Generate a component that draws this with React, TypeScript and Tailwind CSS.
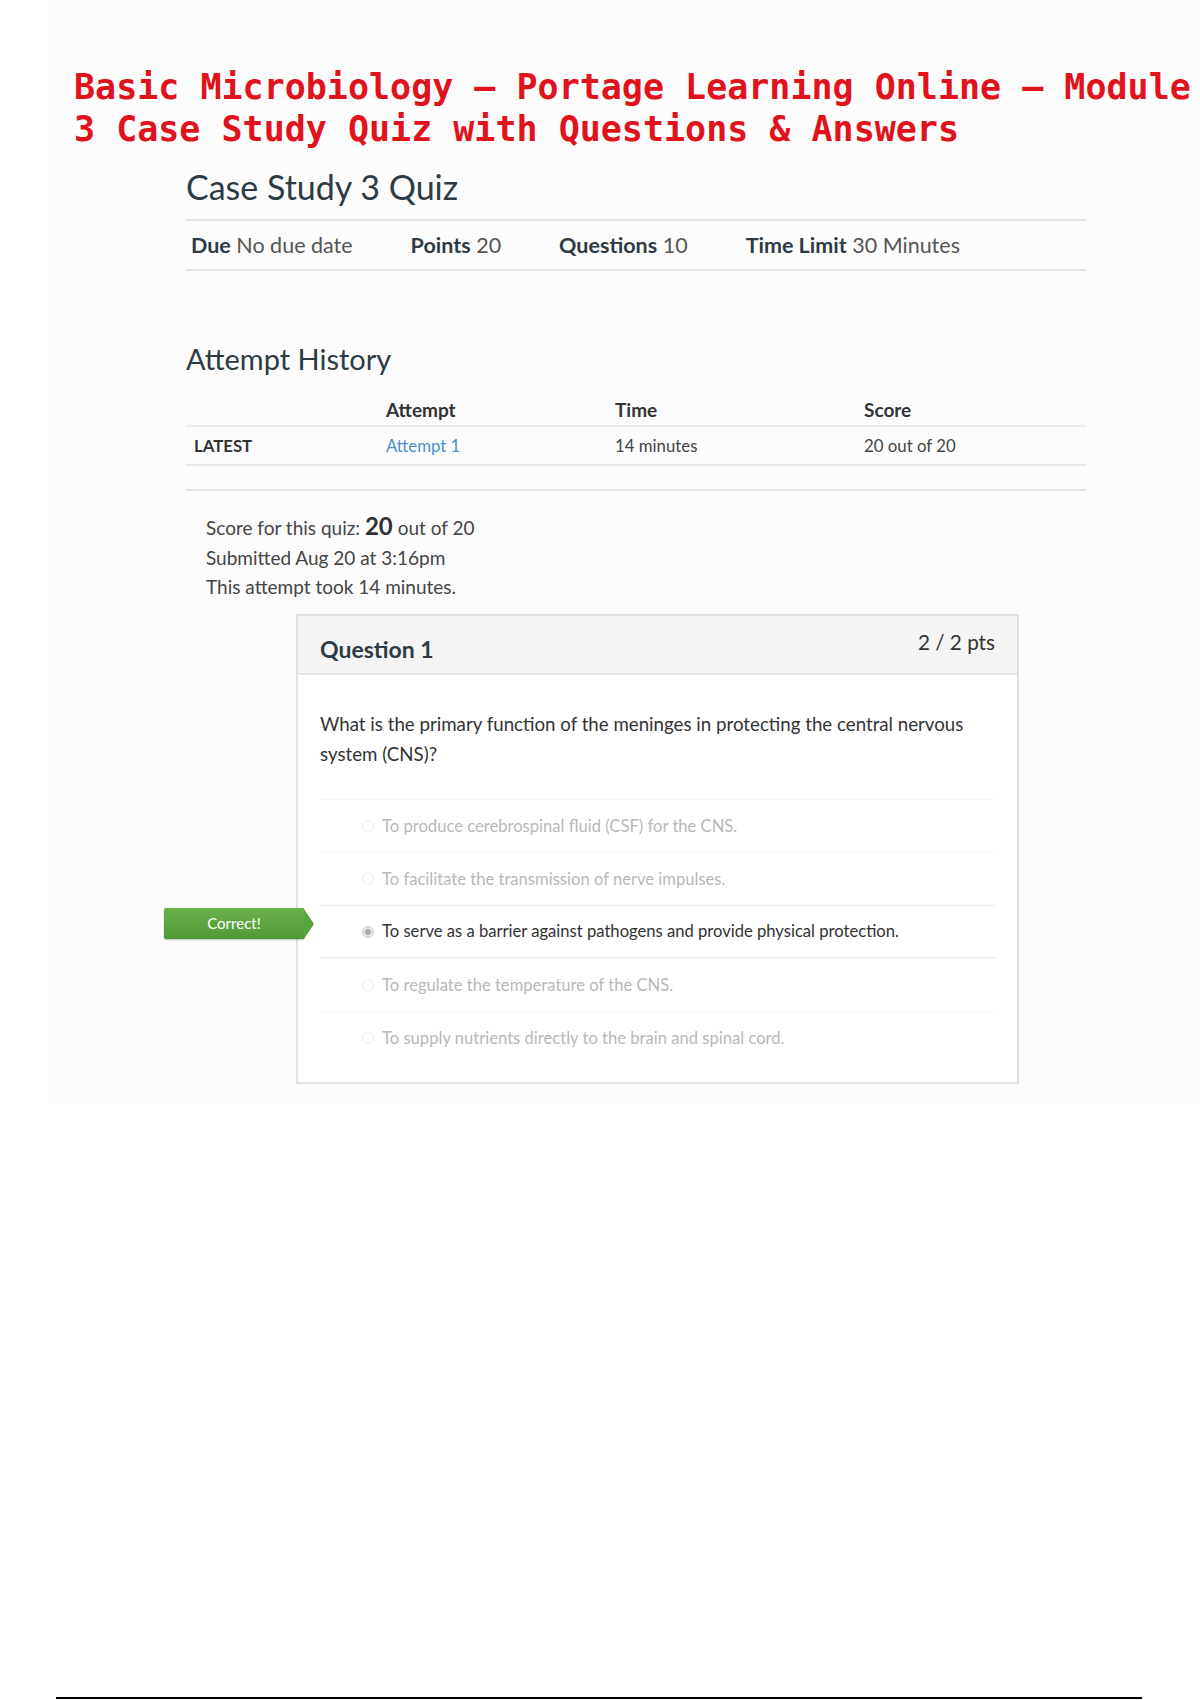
const answers = [
  { text: 'To produce cerebrospinal fluid (CSF) for the CNS.', selected: false },
  { text: 'To facilitate the transmission of nerve impulses.', selected: false },
  { text: 'To serve as a barrier against pathogens and provide physical protection.', selected: true },
  { text: 'To regulate the temperature of the CNS.', selected: false },
  { text: 'To supply nutrients directly to the brain and spinal cord.', selected: false },
];

const meta = [
  { label: 'Due', value: 'No due date' },
  { label: 'Points', value: '20' },
  { label: 'Questions', value: '10' },
  { label: 'Time Limit', value: '30 Minutes' },
];

export default function App() {
  return (
    <div className="flex h-[1700px] w-[1200px] flex-col bg-white font-['Lato','Liberation_Sans',sans-serif] text-[#333]">
      <div className="ml-[48px] bg-[#fcfcfc] pb-[19px] pl-[26px] pt-[66px]">
        {/* document title */}
        <h1 className="w-[1126px] font-['DejaVu_Sans_Mono','Liberation_Mono',monospace] text-[35px] font-bold leading-[42px] text-[#e0131c]">
          Basic Microbiology – Portage Learning Online – Module 3 Case Study Quiz with Questions &amp; Answers
        </h1>

        <div className="ml-[112px] w-[900px]">
          <h2 className="mt-[18px] text-[34px] leading-[38px] text-[#2d3b45]">Case Study 3 Quiz</h2>

          <div className="mt-[13px] flex h-[52px] items-center gap-[58px] border-y-2 border-[#e4e4e4] pl-[5px] text-[21.5px]">
            {meta.map((m) => (
              <div key={m.label}>
                <span className="font-bold text-[#2d3b45]">{m.label}</span>{' '}
                <span className="text-[#555]">{m.value}</span>
              </div>
            ))}
          </div>

          <h3 className="mt-[71px] text-[29px] leading-[34px] text-[#2d3b45]">Attempt History</h3>

          {/* attempt table */}
          <div className="mt-[19px] flex h-[32px] items-center border-b-2 border-[#ececec] text-[19px] font-bold">
            <div className="w-[192px]"></div>
            <div className="w-[229px] pl-[8px]">Attempt</div>
            <div className="w-[249px] pl-[8px]">Time</div>
            <div className="pl-[8px]">Score</div>
          </div>
          <div className="flex h-[39px] items-center border-b-2 border-[#e8e8e8] text-[16.8px]">
            <div className="w-[192px] pl-[8px] font-bold">LATEST</div>
            <div className="w-[229px] pl-[8px] text-[#4a8fcd]">Attempt 1</div>
            <div className="w-[249px] pl-[8px] text-[#444]">14 minutes</div>
            <div className="pl-[8px] text-[#444]">20 out of 20</div>
          </div>
          <div className="h-[25px] border-b-2 border-[#e4e4e4]"></div>

          <div className="ml-[20px] mt-[20px] text-[19px] leading-[30px] text-[#444]">
            <div>
              Score for this quiz: <span className="text-[24px] font-bold text-[#333]">20</span> out of 20
            </div>
            <div>Submitted Aug 20 at 3:16pm</div>
            <div className="leading-[28px]">This attempt took 14 minutes.</div>
          </div>
        </div>

        {/* question card */}
        <div className="ml-[222px] mt-[13px] w-[723px] border-2 border-[#e2e2e2] bg-white">
          <div className="flex h-[59px] justify-between border-b-2 border-[#e6e6e6] bg-[#f5f5f5] px-[22px]">
            <div className="pt-[16px] text-[23px] font-bold text-[#2d3b45]">Question 1</div>
            <div className="pt-[11px] text-[20.7px] text-[#333]">2 / 2 pts</div>
          </div>
          <div className="px-[22px] pb-[18px] pt-[34px]">
            <p className="text-[18.7px] leading-[30px] text-[#333]">
              What is the primary function of the meninges in protecting the central nervous system (CNS)?
            </p>
            <div className="mt-[30px]">
              {answers.map((a, i) => (
                <div
                  key={i}
                  className={`relative flex h-[53px] items-center gap-[8px] pl-[42px] text-[16.6px] ${
                    a.selected ? 'border-y border-[#ececec] text-[#333]' : 'border-t border-[#f6f6f6] text-[#b8b8b8]'
                  }`}
                >
                  <span
                    className={`flex h-[12px] w-[12px] items-center justify-center rounded-full border ${
                      a.selected ? 'border-[#cfcfcf] bg-[#e6e6e6]' : 'border-[#ececec]'
                    }`}
                  >
                    {a.selected && <span className="h-[6px] w-[6px] rounded-full bg-[#aaa]"></span>}
                  </span>
                  <span>{a.text}</span>
                  {a.selected && (
                    <div className="absolute left-[-156px] top-[2px] flex h-[31px] items-center">
                      <div className="flex h-[31px] w-[140px] items-center justify-center rounded-l-[2px] bg-gradient-to-b from-[#6bb14d] to-[#4e9a36] text-[15px] text-white shadow-[0_1px_2px_rgba(0,0,0,0.25)]">
                        Correct!
                      </div>
                      <div className="h-0 w-0 border-y-[15.5px] border-l-[10px] border-y-transparent border-l-[#5aa440]"></div>
                    </div>
                  )}
                </div>
              ))}
            </div>
          </div>
        </div>
      </div>

      <div className="mb-[1px] ml-[56px] mt-auto h-[2px] w-[1086px] bg-black"></div>
    </div>
  );
}
